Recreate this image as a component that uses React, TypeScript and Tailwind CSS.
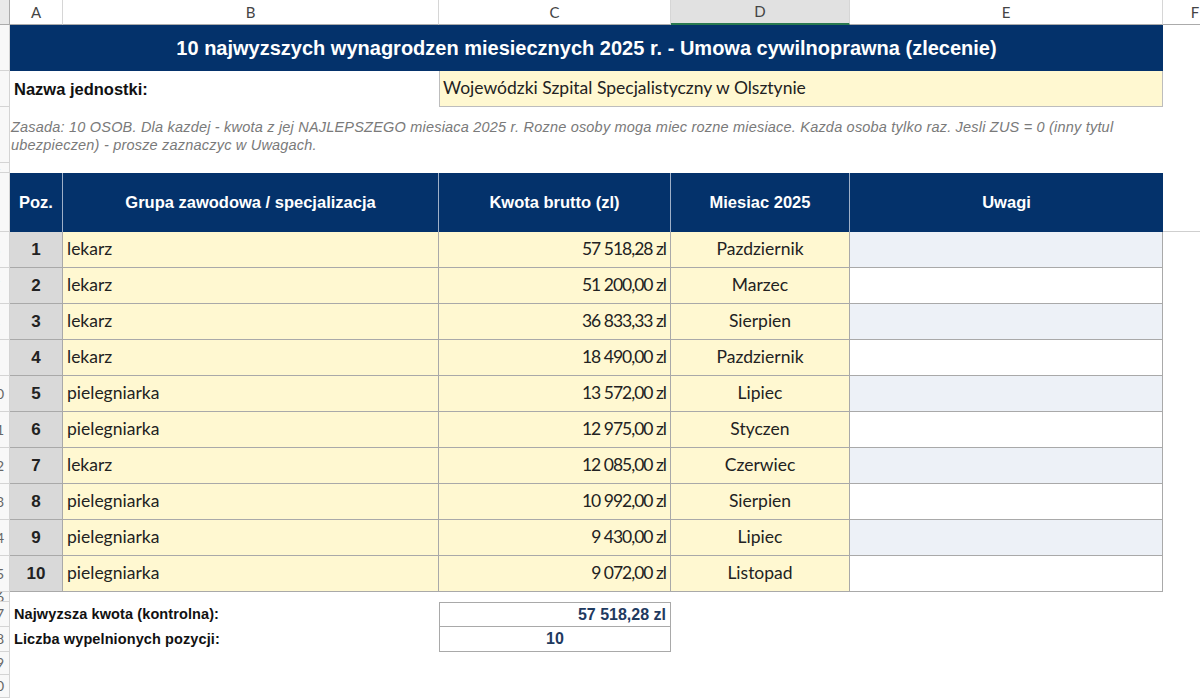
const rows = [
  { n: 1, group: "lekarz", amount: "57 518,28 zl", month: "Pazdziernik" },
  { n: 2, group: "lekarz", amount: "51 200,00 zl", month: "Marzec" },
  { n: 3, group: "lekarz", amount: "36 833,33 zl", month: "Sierpien" },
  { n: 4, group: "lekarz", amount: "18 490,00 zl", month: "Pazdziernik" },
  { n: 5, group: "pielegniarka", amount: "13 572,00 zl", month: "Lipiec" },
  { n: 6, group: "pielegniarka", amount: "12 975,00 zl", month: "Styczen" },
  { n: 7, group: "lekarz", amount: "12 085,00 zl", month: "Czerwiec" },
  { n: 8, group: "pielegniarka", amount: "10 992,00 zl", month: "Sierpien" },
  { n: 9, group: "pielegniarka", amount: "9 430,00 zl", month: "Lipiec" },
  { n: 10, group: "pielegniarka", amount: "9 072,00 zl", month: "Listopad" },
];

const arial = "font-['Liberation_Sans',Arial,sans-serif]";
const calibri = "font-['Lato','Liberation_Sans',sans-serif]";

// row numbers sit in a wider header, only its right edge is in view
function RowHead({ n }: { n: number }) {
  return (
    <div className="flex justify-end overflow-hidden border-r border-b border-[#d4d4d4] bg-[#f8f8f8]">
      <div className={`w-[26px] shrink-0 self-center text-center text-[14px] leading-none text-[#666] ${calibri}`}>{n}</div>
    </div>
  );
}

function ColHead({ label, active }: { label: string; active?: boolean }) {
  return (
    <div
      className={`flex items-center justify-center border-r border-[#d6d6d6] text-[15px] text-[#444] ${calibri} ${
        active ? "border-b-2 border-b-[#2a7a4f] bg-[#e1e1e1]" : "border-b border-b-[#ababab] bg-white"
      }`}
    >
      {label}
    </div>
  );
}

export default function App() {
  return (
    <div className="h-[698px] w-[1200px] overflow-hidden bg-white">
      <div className="grid grid-cols-[10px_53px_376px_232px_179px_313px_1fr] grid-rows-[25px_46px_36px_56px_10px_59px_repeat(10,36px)_10px_25px_25px_23px_23px]">
        {/* column letters */}
        <div className="border-r border-b border-[#ababab] bg-[#e9e9e9]" />
        <ColHead label="A" />
        <ColHead label="B" />
        <ColHead label="C" />
        <ColHead label="D" active />
        <ColHead label="E" />
        <div className="flex overflow-hidden border-b border-[#ababab] bg-white">
          <div className={`flex w-[64px] shrink-0 items-center justify-center text-[15px] text-[#444] ${calibri}`}>F</div>
        </div>

        {/* title */}
        <RowHead n={1} />
        <div className={`col-span-5 flex items-center justify-center whitespace-nowrap bg-[#04326b] text-[20px] font-bold text-white ${arial}`}>
          10 najwyzszych wynagrodzen miesiecznych 2025 r. - Umowa cywilnoprawna (zlecenie)
        </div>
        <div />

        {/* nazwa */}
        <RowHead n={2} />
        <div className={`col-span-2 flex items-center pl-[4px] text-[16.5px] font-bold text-[#111] ${arial}`}>Nazwa jednostki:</div>
        <div className={`col-span-3 flex items-center border-x border-b border-[#bdbdbd] bg-[#fff8d1] pl-[3px] text-[17.5px] text-[#222] ${calibri}`}>
          Wojewódzki Szpital Specjalistyczny w Olsztynie
        </div>
        <div />

        {/* zasada */}
        <RowHead n={3} />
        <div className={`col-span-5 whitespace-nowrap pt-[11px] pl-[1px] text-[14.5px] leading-[18px] tracking-[0.2px] italic text-[#7a7a7a] ${arial}`}>
          Zasada: 10 OSOB. Dla kazdej - kwota z jej NAJLEPSZEGO miesiaca 2025 r. Rozne osoby moga miec rozne miesiace. Kazda osoba tylko raz. Jesli ZUS = 0 (inny tytul
          <br />
          ubezpieczen) - prosze zaznaczyc w Uwagach.
        </div>
        <div />

        <RowHead n={4} />
        <div className="col-span-5" />
        <div />

        {/* table header */}
        <RowHead n={5} />
        {["Poz.", "Grupa zawodowa / specjalizacja", "Kwota brutto (zl)", "Miesiac 2025", "Uwagi"].map((h, i) => (
          <div
            key={h}
            className={`flex items-center justify-center whitespace-nowrap bg-[#04326b] text-[16.5px] font-bold text-white ${arial} ${
              i < 4 ? "border-r border-[#9fb0c8]" : ""
            }`}
          >
            {h}
          </div>
        ))}
        <div className="border-b border-[#cfcfcf]" />

        {/* data rows */}
        {rows.map((r, i) => (
          <div key={r.n} className="contents">
            <RowHead n={r.n + 5} />
            <div className={`flex items-center justify-center border-r border-b border-[#a9a9a9] bg-[#d9d9d9] text-[17px] font-bold text-[#222] ${arial}`}>
              {r.n}
            </div>
            <div className={`flex items-center border-r border-b border-[#a9a9a9] bg-[#fff8d1] pl-[4px] text-[17.5px] text-[#222] ${calibri}`}>
              {r.group}
            </div>
            <div className={`flex items-center justify-end whitespace-nowrap border-r border-b border-[#a9a9a9] bg-[#fff8d1] pr-[4px] text-[17.5px] tracking-[-1px] text-[#222] ${calibri}`}>
              {r.amount}
            </div>
            <div className={`flex items-center justify-center border-r border-b border-[#a9a9a9] bg-[#fff8d1] text-[17.5px] text-[#222] ${calibri}`}>
              {r.month}
            </div>
            <div className={`border-r border-b border-[#a9a9a9] ${i % 2 === 0 ? "bg-[#edf1f7]" : "bg-white"}`} />
            <div />
          </div>
        ))}

        <RowHead n={16} />
        <div className="col-span-6" />

        {/* footer */}
        <RowHead n={17} />
        <div className={`col-span-2 flex items-center whitespace-nowrap pl-[4px] text-[14.5px] tracking-[0.1px] font-bold text-[#111] ${arial}`}>
          Najwyzsza kwota (kontrolna):
        </div>
        <div className={`flex items-center justify-end border border-[#a9a9a9] pr-[4px] text-[16px] font-bold text-[#1f3a5f] ${arial}`}>
          57 518,28 zl
        </div>
        <div className="col-span-3" />

        <RowHead n={18} />
        <div className={`col-span-2 flex items-center whitespace-nowrap pl-[4px] text-[14.5px] tracking-[0.1px] font-bold text-[#111] ${arial}`}>
          Liczba wypelnionych pozycji:
        </div>
        <div className={`flex items-center justify-center border-x border-b border-[#a9a9a9] text-[16px] font-bold text-[#1f3a5f] ${arial}`}>
          10
        </div>
        <div className="col-span-3" />

        <RowHead n={19} />
        <div className="col-span-6" />
        <RowHead n={20} />
        <div className="col-span-6" />
      </div>
    </div>
  );
}
